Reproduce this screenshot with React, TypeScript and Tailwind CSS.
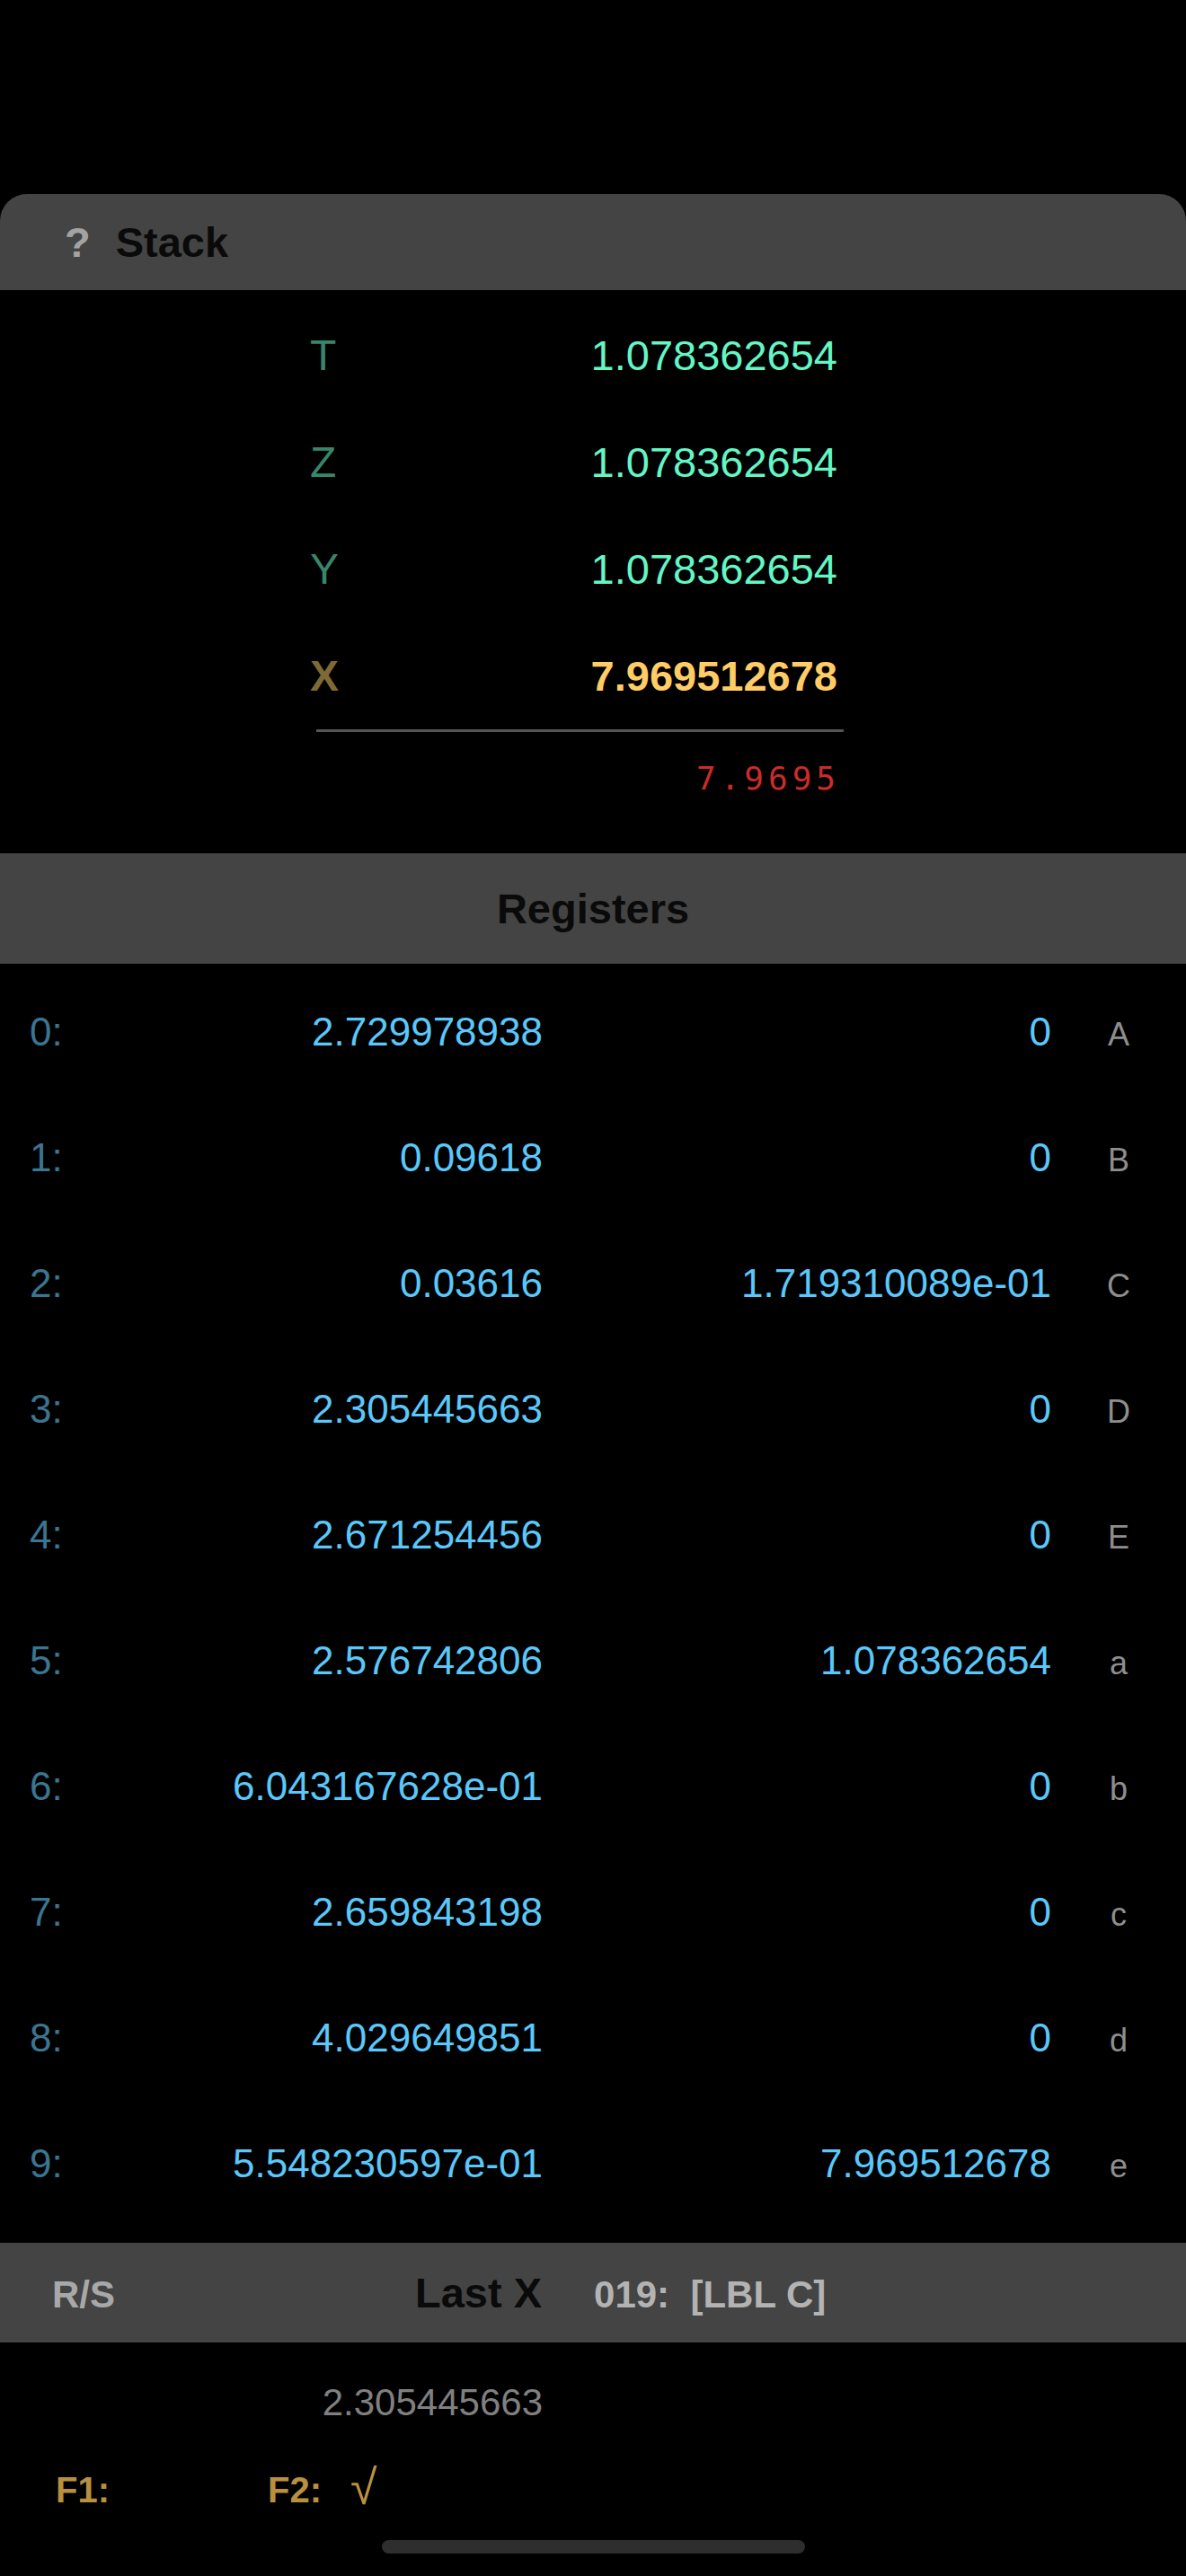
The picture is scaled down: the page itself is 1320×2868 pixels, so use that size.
import React from 'react';

const stackRows = [
    { label: 'T', value: '1.078362654' },
    { label: 'Z', value: '1.078362654' },
    { label: 'Y', value: '1.078362654' },
];

const registers = [
    { idx: '0:', left: '2.729978938', right: '0', name: 'A' },
    { idx: '1:', left: '0.09618', right: '0', name: 'B' },
    { idx: '2:', left: '0.03616', right: '1.719310089e-01', name: 'C' },
    { idx: '3:', left: '2.305445663', right: '0', name: 'D' },
    { idx: '4:', left: '2.671254456', right: '0', name: 'E' },
    { idx: '5:', left: '2.576742806', right: '1.078362654', name: 'a' },
    { idx: '6:', left: '6.043167628e-01', right: '0', name: 'b' },
    { idx: '7:', left: '2.659843198', right: '0', name: 'c' },
    { idx: '8:', left: '4.029649851', right: '0', name: 'd' },
    { idx: '9:', left: '5.548230597e-01', right: '7.969512678', name: 'e' },
];

const StackPanel: React.FC = () => (
    <div>
        <div className="h-[107px] bg-[#444444] rounded-t-[30px] flex items-center pl-[72px]">
            <span className="text-[47px] font-bold text-[#a3a3a3] leading-none">?</span>
            <span className="ml-[28px] text-[47px] font-bold text-[#0a0a0a] leading-none">Stack</span>
        </div>

        <div className="pt-[13px]">
            {stackRows.map((row) => (
                <div key={row.label} className="h-[119px] flex items-center">
                    <div className="ml-[345px] w-[587px] flex items-baseline justify-between">
                        <span className="text-[48px] text-[#37866b] leading-none">{row.label}</span>
                        <span className="text-[47px] text-[#63f7c6] leading-none">{row.value}</span>
                    </div>
                </div>
            ))}
            <div className="h-[119px] flex items-center">
                <div className="ml-[345px] w-[587px] flex items-baseline justify-between">
                    <span className="text-[48px] font-bold text-[#7e6a36] leading-none">X</span>
                    <span className="text-[47px] font-bold text-[#ffcc66] leading-none">7.969512678</span>
                </div>
            </div>
            <div className="ml-[352px] w-[587px] h-[3px] bg-[#555555]" />
            <div className="ml-[345px] w-[590px] mt-[28px] flex justify-end">
                <span className="font-['DejaVu_Sans_Mono',monospace] text-[36px] tracking-[5px] leading-[48px] text-[#cc2b2b]">
                    7.9695
                </span>
            </div>
        </div>
    </div>
);

const RegistersPanel: React.FC = () => (
    <div className="mt-[59px]">
        <div className="h-[123px] bg-[#444444] flex items-center justify-center">
            <span className="text-[47px] font-bold text-[#0a0a0a] leading-none">Registers</span>
        </div>
        <div className="pt-[6px]">
            {registers.map((r) => (
                <div key={r.idx} className="h-[140px] flex items-center">
                    <div className="flex items-baseline pl-[33px]">
                        <span className="w-[120px] text-[44px] leading-none text-[#3a7591]">{r.idx}</span>
                        <span className="w-[451px] text-right text-[44px] leading-none text-[#5ac8fa]">{r.left}</span>
                        <span className="w-[566px] text-right text-[44px] leading-none text-[#5ac8fa]">{r.right}</span>
                        <span className="ml-[47px] w-[56px] text-center text-[36px] leading-none text-[#8e8e8e]">{r.name}</span>
                    </div>
                </div>
            ))}
        </div>
    </div>
);

const LastXPanel: React.FC = () => (
    <div className="mt-[18px]">
        <div className="h-[111px] bg-[#444444] flex items-center">
            <div className="flex items-baseline">
                <span className="w-[462px] pl-[58px] text-[42px] font-bold leading-none text-[#a8a8a8]">R/S</span>
                <span className="text-[47px] font-bold leading-none text-[#0a0a0a]">Last X</span>
                <span className="ml-[58px] text-[42px] font-bold leading-none text-[#b3b3b3] whitespace-pre">019:  [LBL C]</span>
            </div>
        </div>
        <div className="mt-[42px] w-[604px] text-right text-[42px] leading-[50px] text-[#808080]">2.305445663</div>
        <div className="mt-[48px] h-[48px] flex items-center">
            <span className="ml-[62px] w-[236px] text-[40px] font-bold leading-none text-[#b8903e]">F1:</span>
            <span className="text-[40px] font-bold leading-none text-[#b8903e]">F2:</span>
            <span className="ml-[32px] -mt-[6px] text-[54px] leading-none text-[#b8903e] font-['Liberation_Sans','DejaVu_Sans',sans-serif]">√</span>
        </div>
    </div>
);

const App: React.FC = () => {
    return (
        <div className="min-h-[2868px] w-[1320px] bg-black font-['Liberation_Sans',Arial,sans-serif] overflow-hidden">
            <div className="h-[216px]" />
            <StackPanel />
            <RegistersPanel />
            <LastXPanel />
            <div className="mt-[32px] ml-[425px] w-[471px] h-[15px] rounded-full bg-[#2e2e2e]" />
        </div>
    );
};

export default App;
